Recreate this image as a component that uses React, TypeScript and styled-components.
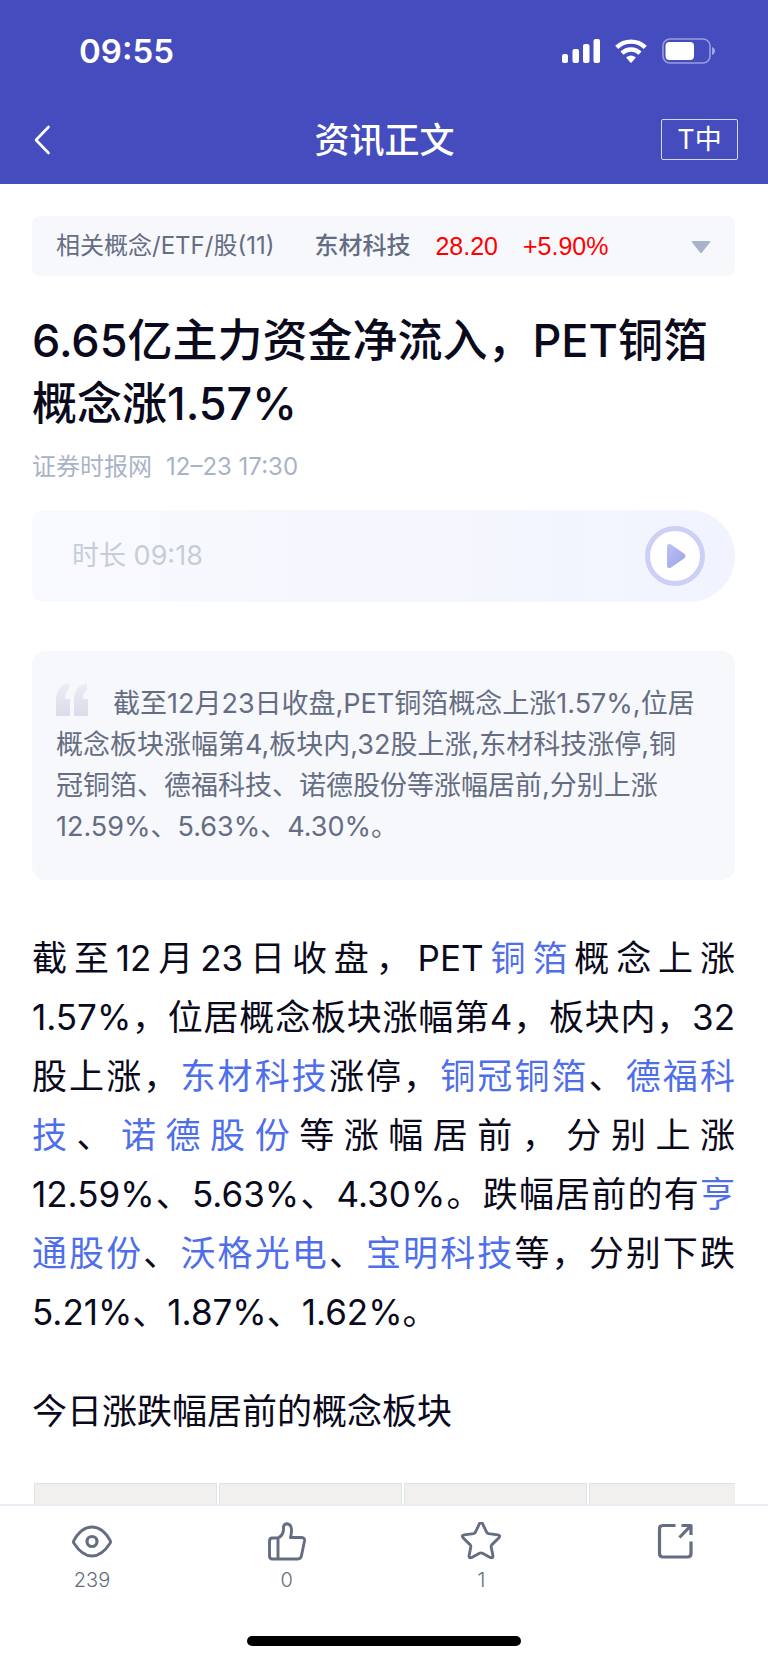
import React from "react";
import styled, { createGlobalStyle } from "styled-components";

const color = {
  brand: "#454dbe",
  ink: "#0a0a1c",
  slate: "#656d82",
  faint: "#a9b3c7",
  panel: "#f7f8fc",
  link: "#4f6fea",
  up: "#ff0000",
};

const GlobalStyle = createGlobalStyle`
  * { box-sizing: border-box; }
  body {
    margin: 0;
    background: #fff;
    color: ${color.ink};
    font-family: Inter, "Noto Sans CJK SC", sans-serif;
  }
  button {
    margin: 0;
    padding: 0;
    border: 0;
    background: none;
    color: inherit;
    font: inherit;
    cursor: pointer;
  }
`;

const Page = styled.div`
  display: flex;
  flex-direction: column;
  height: 100vh;
`;

const Top = styled.header`
  flex: none;
  background: ${color.brand};
  color: #fff;
`;

const StatusBar = styled.div`
  display: flex;
  align-items: center;
  justify-content: space-between;
  height: 102px;
  padding: 0 52px 0 79px;
`;

const Clock = styled.time`
  font-size: 33px;
  font-weight: 600;
  line-height: 40px;
`;

const StatusIcons = styled.div`
  display: flex;
  align-items: center;
  gap: 15px;
`;

const NavBar = styled.nav`
  display: grid;
  grid-template-columns: 1fr auto 1fr;
  align-items: center;
  height: 82px;
  padding: 0 30px 7px 31px;
`;

const BackButton = styled.button`
  display: flex;
  justify-self: start;
`;

const NavTitle = styled.div`
  font-size: 35px;
  font-weight: 500;
  line-height: 48px;
`;

const FontSizeButton = styled.button`
  justify-self: end;
  width: 77px;
  height: 41px;
  border: 1px solid #d5d8f5;
  border-radius: 2px;
  font-size: 27px;
  line-height: 39px;
`;

const Article = styled.main`
  flex: 1;
  min-height: 0;
  overflow-y: auto;
  scrollbar-width: none;
  padding: 32px 33px 0 32px;
`;

const StockBar = styled.button`
  display: flex;
  align-items: center;
  width: 100%;
  height: 60px;
  padding: 0 24px;
  border-radius: 8px;
  background: ${color.panel};
  color: ${color.slate};
  font-size: 24px;
  line-height: 32px;
`;

const StockName = styled.span`
  margin-left: 40px;
  font-weight: 500;
`;

const Quote = styled.span`
  margin-left: 25px;
  color: ${color.up};
  font-family: "Liberation Sans", sans-serif;
  font-size: 25px;
`;

const Caret = styled.svg`
  margin-left: auto;
`;

const Headline = styled.h1`
  margin: 33px 0 0;
  font-size: 45px;
  font-weight: 500;
  line-height: 63px;
`;

const Byline = styled.div`
  display: flex;
  gap: 14px;
  margin-top: 16px;
  color: ${color.faint};
  font-size: 24px;
  line-height: 32px;
`;

const AudioBar = styled.section`
  display: flex;
  align-items: center;
  justify-content: space-between;
  height: 92px;
  margin-top: 27px;
  padding: 0 30px 0 40px;
  border-radius: 12px 46px 46px 12px;
  background: linear-gradient(90deg, #f9faff, #f6f7fe 50%, #f1f4ff);
  color: #c6cdd9;
  font-size: 27px;
  line-height: 40px;
`;

const PlayButton = styled.button`
  display: flex;
  align-items: center;
  justify-content: center;
  width: 60px;
  height: 60px;
  border: 5px solid #cdd0f6;
  border-radius: 50%;
  background: #fff;
`;

const Summary = styled.blockquote`
  margin: 49px 0 0;
  padding: 32px 34px 33px 24px;
  border-radius: 14px;
  background: ${color.panel};
  color: ${color.slate};
  font-size: 27px;
  line-height: 41px;
`;

const QuoteMark = styled.svg`
  float: left;
  margin-right: 24px;
`;

const Paragraph = styled.p`
  margin: 49px 0 0;
  font-size: 35px;
  line-height: 59px;
  text-align: justify;
`;

const Subheading = styled.h2`
  margin: 40px 0 0;
  font-size: 35px;
  font-weight: 400;
  line-height: 59px;
`;

const StockLink = styled.a`
  color: ${color.link};
  text-decoration: none;
`;

const TableScroller = styled.div`
  margin-top: 40px;
  overflow: hidden;
`;

const SectorTable = styled.table`
  width: 742px;
  border-spacing: 2px;
  table-layout: fixed;
`;

const HeaderCell = styled.th`
  height: 80px;
  border: 1px solid #e0e3e5;
  background: #f1f0ee;
`;

const BottomBar = styled.footer`
  flex: none;
  padding: 16px 58px 17px;
  border-top: 2px solid #e9ecf2;
  background: #fff;
  color: ${color.slate};
`;

const Actions = styled.div`
  display: flex;
  justify-content: space-between;
`;

const Action = styled.button`
  display: flex;
  flex-direction: column;
  align-items: center;
  width: 68px;
  font-size: 20px;
  font-weight: 300;
  line-height: 28px;
  gap: 4px;
`;

const HomeIndicator = styled.div`
  width: 274px;
  height: 10px;
  margin: 42px auto 0;
  border-radius: 5px;
  background: #000;
`;

const Icon = ({ label, children }: { label: string; children: React.ReactNode }) => (
  <svg
    width="42"
    height="40"
    viewBox="0 0 42 40"
    fill="none"
    stroke="currentColor"
    strokeWidth="2.9"
    strokeLinejoin="round"
    role="img"
    aria-label={label}
  >
    {children}
  </svg>
);

export default function App() {
  return (
    <Page lang="zh-CN">
      <GlobalStyle />
      <Top>
        <StatusBar>
          <Clock>09:55</Clock>
          <StatusIcons aria-hidden="true">
            <svg width="38" height="24" viewBox="0 0 38 24" fill="#fff">
              <rect y="15" width="6" height="9" rx="2" />
              <rect x="10.5" y="10" width="6.5" height="14" rx="2" />
              <rect x="21" y="5" width="6.5" height="19" rx="2" />
              <rect x="31.5" width="6.5" height="24" rx="2" />
            </svg>
            <svg width="32" height="24" viewBox="0 0 32 24">
              <g fill="none" stroke="#fff" strokeWidth="4.4">
                <path d="M1.7 8.4A20.5 20.5 0 0 1 30.3 8.4" />
                <path d="M7 14.1A13 13 0 0 1 25 14.1" />
              </g>
              <path
                d="M11.5 18.9Q11 18.4 11.6 17.9Q16 14.9 20.4 17.9Q21 18.4 20.5 18.9L16.6 23.4Q16 24 15.4 23.4Z"
                fill="#fff"
              />
            </svg>
            <svg width="54" height="26" viewBox="0 0 54 26">
              <rect x="1" y="1" width="47" height="24" rx="7" fill="none" stroke="#fff" strokeOpacity="0.45" strokeWidth="1.6" />
              <rect x="3.5" y="4" width="28.5" height="18" rx="4" fill="#fff" />
              <path d="M50 9q3 1.200 3 4t-3 4z" fill="#fff" fillOpacity="0.5" />
            </svg>
          </StatusIcons>
        </StatusBar>
        <NavBar>
          <BackButton aria-label="返回">
            <svg width="20" height="32" viewBox="0 0 20 32" fill="none" stroke="#fff" strokeWidth="2.6" strokeLinecap="round" strokeLinejoin="round">
              <path d="M17.500 3L5 16L17.500 29" />
            </svg>
          </BackButton>
          <NavTitle>资讯正文</NavTitle>
          <FontSizeButton aria-label="字号">T中</FontSizeButton>
        </NavBar>
      </Top>

      <Article>
        <StockBar>
          <span>相关概念/ETF/股(11)</span>
          <StockName>东材科技</StockName>
          <Quote>28.20</Quote>
          <Quote>+5.90%</Quote>
          <Caret width="20" height="16" viewBox="0 0 20 16" fill={color.faint}>
            <path d="M1.500 3H18.500Q20 3 19 4.300L11 14.500Q10 15.500 9 14.500L1 4.300Q0 3 1.500 3Z" />
          </Caret>
        </StockBar>

        <Headline>6.65亿主力资金净流入，PET铜箔概念涨1.57%</Headline>
        <Byline>
          <span>证券时报网</span>
          <time>12–23 17:30</time>
        </Byline>

        <AudioBar>
          <span>时长 09:18</span>
          <PlayButton aria-label="播放">
            <svg width="50" height="50" viewBox="0 0 50 50">
              <defs>
                <linearGradient id="play" x1="0" y1="0" x2="1" y2="1">
                  <stop offset="0" stopColor="#bcc1f4" />
                  <stop offset="1" stopColor="#9da2e8" />
                </linearGradient>
              </defs>
              <path
                d="M17 16.500Q17 11.500 21 13.500L34 22.500Q37 25 34 27.500L21 36.500Q17 38.500 17 33.500Z"
                fill="url(#play)"
              />
            </svg>
          </PlayButton>
        </AudioBar>

        <Summary>
          <QuoteMark width="33" height="34" viewBox="0 0 33 34" aria-hidden="true">
            <defs>
              <linearGradient id="mark" x1="0" y1="0" x2="0" y2="1">
                <stop offset="0" stopColor="#ebeef5" />
                <stop offset="1" stopColor="#d9dce9" />
              </linearGradient>
            </defs>
            <path
              d="M0 33V17Q0 3 13 0V6Q9 10 9 16H14V33ZM18 33V17Q18 3 31 0V6Q27 10 27 16H32V33Z"
              fill="url(#mark)"
            />
          </QuoteMark>
          截至12月23日收盘,PET铜箔概念上涨1.57%,位居概念板块涨幅第4,板块内,32股上涨,东材科技涨停,铜冠铜箔、德福科技、诺德股份等涨幅居前,分别上涨12.59%、5.63%、4.30%。
        </Summary>

        <Paragraph>
          截至12月23日收盘，PET<StockLink href="#tongbo">铜箔</StockLink>概念上涨1.57%，位居概念板块涨幅第4，板块内，32股上涨，
          <StockLink href="#dongcai">东材科技</StockLink>涨停，<StockLink href="#tongguan">铜冠铜箔</StockLink>、
          <StockLink href="#defu">德福科技</StockLink>、<StockLink href="#nuode">诺德股份</StockLink>
          等涨幅居前，分别上涨12.59%、5.63%、4.30%。跌幅居前的有<StockLink href="#hengtong">亨通股份</StockLink>、
          <StockLink href="#woge">沃格光电</StockLink>、<StockLink href="#baoming">宝明科技</StockLink>
          等，分别下跌5.21%、1.87%、1.62%。
        </Paragraph>

        <Subheading>今日涨跌幅居前的概念板块</Subheading>
        <TableScroller>
          <SectorTable>
            <thead>
              <tr>
                <HeaderCell scope="col" />
                <HeaderCell scope="col" />
                <HeaderCell scope="col" />
                <HeaderCell scope="col" />
              </tr>
            </thead>
          </SectorTable>
        </TableScroller>
      </Article>

      <BottomBar>
        <Actions>
          <Action>
            <Icon label="阅读">
              <path d="M2.800 18.500Q10.500 5 21 5T39.200 18.500Q40 19.700 39.200 21Q31 34 21 34T2.800 21Q2 19.700 2.800 18.500Z" />
              <circle cx="21" cy="19.500" r="5" strokeWidth="3.200" />
            </Icon>
            239
          </Action>
          <Action>
            <Icon label="点赞">
              <path d="M6.500 16H12Q17 13.500 17.500 8V5Q18 1.700 21 1.700Q26 2.500 25.500 9Q25.300 12.500 24.500 15.500H35.500Q39 15.800 38.500 19L35.500 33.500Q34.800 37 32 37H6.500Q3.500 37 3.500 34V19Q3.500 16 6.500 16ZM12 16V37" />
            </Icon>
            0
          </Action>
          <Action>
            <Icon label="收藏">
              <path d="M19.400 1.800Q21 -1 22.600 1.800L26.500 10Q27.200 11.300 28.500 11.600L37.800 12.900Q41 13.500 38.700 16L32 22.600Q31 23.700 31.200 25L32.900 33.500Q33.300 36.700 30.200 35.400L22.500 31.200Q21 30.500 19.500 31.200L11.800 35.400Q8.700 36.700 9.100 33.500L10.800 25Q11 23.700 10 22.600L3.300 16Q1 13.500 4.200 12.900L13.500 11.600Q14.800 11.300 15.500 10Z" />
            </Icon>
            1
          </Action>
          <Action>
            <Icon label="分享">
              <path strokeWidth="3.200" d="M20.500 3.500H8Q4.500 3.500 4.500 7V31.500Q4.500 35 8 35H32.500Q36 35 36 31.500V19.500M26.500 3.500H36V13M35.500 4L24.500 15.500" />
            </Icon>
          </Action>
        </Actions>
        <HomeIndicator />
      </BottomBar>
    </Page>
  );
}
